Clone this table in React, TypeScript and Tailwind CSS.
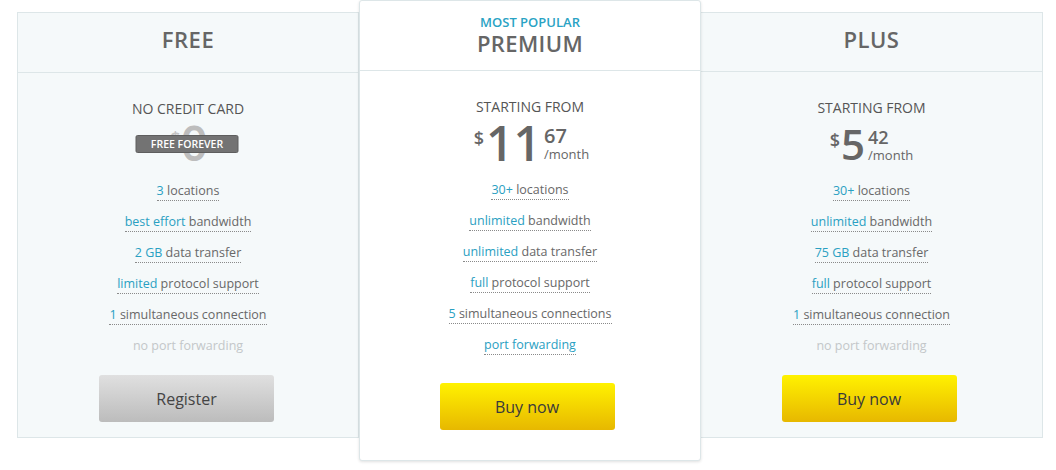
import React from "react";

type Feat = { hi?: string; rest: string; muted?: boolean };

const font = { fontFamily: '"Open Sans", "Noto Sans", sans-serif' };

function Feature({ f }: { f: Feat }) {
  if (f.muted) {
    return (
      <span className="text-[12.5px] leading-[18px] text-[#c3c7c9] border-b border-transparent">
        {f.rest}
      </span>
    );
  }
  return (
    <span className="text-[12.5px] leading-[18px] text-[#686868] border-b border-dotted border-[#8a8a8a]">
      {f.hi && <span className="text-[#2aa0c2]">{f.hi}</span>}
      {f.rest}
    </span>
  );
}

function Features({ list }: { list: Feat[] }) {
  return (
    <div className="flex flex-col items-center gap-[12px]">
      {list.map((f, i) => (
        <Feature key={i} f={f} />
      ))}
    </div>
  );
}

const freeF: Feat[] = [
  { hi: "3", rest: " locations" },
  { hi: "best effort", rest: " bandwidth" },
  { hi: "2 GB", rest: " data transfer" },
  { hi: "limited", rest: " protocol support" },
  { hi: "1", rest: " simultaneous connection" },
  { rest: "no port forwarding", muted: true },
];
const premF: Feat[] = [
  { hi: "30+", rest: " locations" },
  { hi: "unlimited", rest: " bandwidth" },
  { hi: "unlimited", rest: " data transfer" },
  { hi: "full", rest: " protocol support" },
  { hi: "5", rest: " simultaneous connections" },
  { hi: "port forwarding", rest: "" },
];
const plusF: Feat[] = [
  { hi: "30+", rest: " locations" },
  { hi: "unlimited", rest: " bandwidth" },
  { hi: "75 GB", rest: " data transfer" },
  { hi: "full", rest: " protocol support" },
  { hi: "1", rest: " simultaneous connection" },
  { rest: "no port forwarding", muted: true },
];

function YellowBtn() {
  return (
    <button className="w-[175px] h-[47px] rounded-[3px] bg-gradient-to-b from-[#fff200] to-[#e7b800] text-[16px] text-[#3a3a3a]">
      Buy now
    </button>
  );
}

export default function App() {
  return (
    <div className="w-[1056px] h-[470px] bg-white" style={font}>
      <div className="flex items-start pl-[17px]">
        {/* FREE */}
        <div className="mt-[12px] w-[342px] h-[426px] border border-[#dde6e8] bg-[#f5f9fa] flex flex-col">
          <div className="h-[60px] border-b border-[#dde6e8] flex items-center justify-center pb-[6px]">
            <span className="text-[22px] font-semibold text-[#666] tracking-[0.5px]">FREE</span>
          </div>
          <div className="flex flex-col items-center pt-[26px]">
            <div className="text-[14px] leading-[20px] text-[#555]">NO CREDIT CARD</div>
            <div className="relative h-[48px] flex items-start justify-center pl-[2px]">
              <span className="text-[18px] font-semibold text-[#c4c4c4] leading-none mt-[10px]">$</span>
              <span className="text-[48px] font-semibold text-[#bdbdbd] leading-[48px]">0</span>
              <div className="absolute left-1/2 -translate-x-1/2 -ml-[1px] top-[16px] w-[103px] h-[18px] rounded-[2px] bg-[#737373] border border-[#5e5e5e] flex items-center justify-center">
                <span className="text-[10.5px] font-semibold text-white leading-none">FREE FOREVER</span>
              </div>
            </div>
            <div className="mt-[15px]">
              <Features list={freeF} />
            </div>
            <button className="mt-[19px] mr-[3px] w-[175px] h-[47px] rounded-[3px] bg-gradient-to-b from-[#e0e0e0] to-[#bcbcbc] text-[16px] text-[#444]">
              Register
            </button>
          </div>
        </div>

        {/* PREMIUM */}
        <div className="relative z-10 w-[342px] h-[461px] border border-[#dde6e8] rounded-[3px] bg-white shadow-[0_1px_3px_rgba(0,0,0,0.12)] flex flex-col">
          <div className="h-[70px] border-b border-[#dde6e8] flex flex-col items-center pt-[12px]">
            <span className="text-[13px] leading-[18px] font-semibold text-[#2aa3c4]">MOST POPULAR</span>
            <span className="text-[22px] leading-[24px] font-semibold text-[#666] tracking-[0.4px]">PREMIUM</span>
          </div>
          <div className="flex flex-col items-center pt-[26px]">
            <div className="text-[14px] leading-[20px] text-[#555]">STARTING FROM</div>
            <div className="flex items-start mt-[2px] h-[48px] pl-[3px]">
              <span className="text-[18px] font-semibold text-[#666] leading-none mt-[10px] mr-[2px]">$</span>
              <span className="text-[48px] font-semibold text-[#666] leading-[48px]">11</span>
              <div className="flex flex-col ml-[3px] mt-[7px]">
                <span className="text-[20px] font-semibold text-[#666] leading-[20px]">67</span>
                <span className="text-[13px] text-[#666] leading-[16px]">/month</span>
              </div>
            </div>
            <div className="mt-[14px]">
              <Features list={premF} />
            </div>
            <div className="mt-[28px] mr-[6px]">
              <YellowBtn />
            </div>
          </div>
        </div>

        {/* PLUS */}
        <div className="mt-[12px] w-[343px] h-[426px] -ml-[1px] border border-[#dde6e8] bg-[#f5f9fa] flex flex-col">
          <div className="h-[59px] border-b border-[#dde6e8] flex items-center justify-center pb-[6px]">
            <span className="text-[22px] font-semibold text-[#666] tracking-[0.5px]">PLUS</span>
          </div>
          <div className="flex flex-col items-center pt-[26px]">
            <div className="text-[14px] leading-[20px] text-[#555]">STARTING FROM</div>
            <div className="flex items-start mt-[2px] h-[48px]">
              <span className="text-[18px] font-semibold text-[#666] leading-none mt-[11px] mr-[1px]">$</span>
              <span className="text-[42px] font-semibold text-[#666] leading-[48px]">5</span>
              <div className="flex flex-col ml-[3px] mt-[7px]">
                <span className="text-[18px] font-semibold text-[#666] leading-[20px]">42</span>
                <span className="text-[13px] text-[#666] leading-[16px]">/month</span>
              </div>
            </div>
            <div className="mt-[14px]">
              <Features list={plusF} />
            </div>
            <div className="mt-[19px] mr-[5px]">
              <YellowBtn />
            </div>
          </div>
        </div>
      </div>
    </div>
  );
}
